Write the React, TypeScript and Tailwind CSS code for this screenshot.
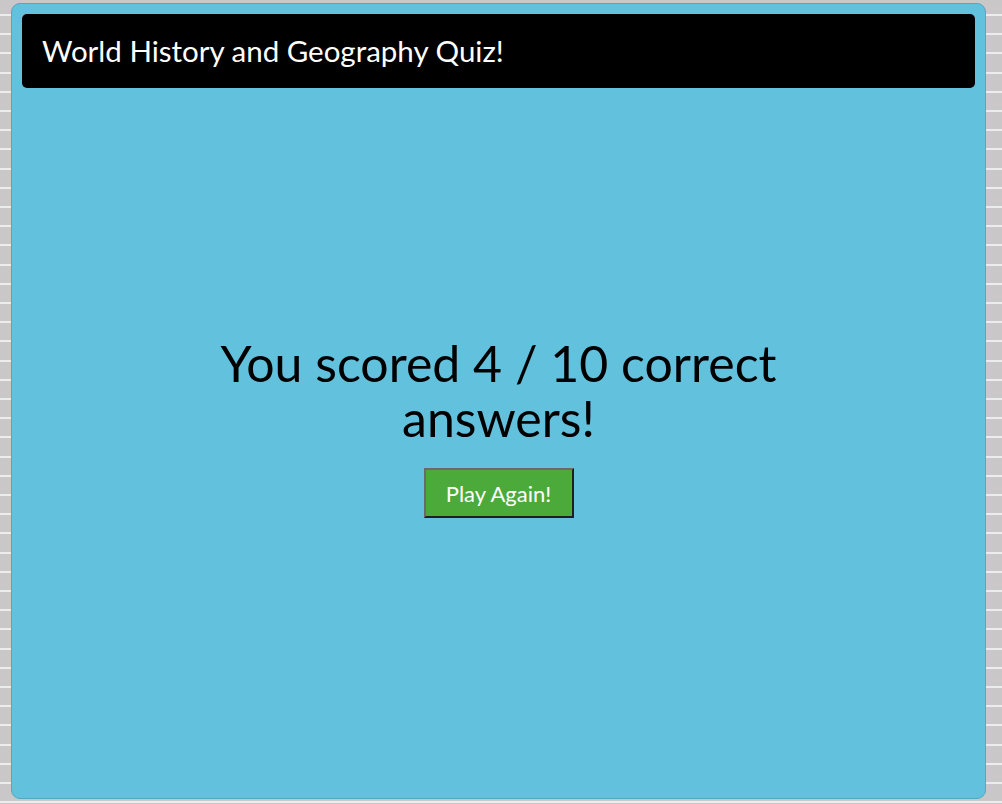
import React from "react";

const App: React.FC = () => {
  return (
    <div className="w-[1002px] h-[804px] overflow-hidden bg-[#c9c7c7] bg-[repeating-linear-gradient(to_bottom,#c9c7c7_0px,#c9c7c7_14px,#ececec_14px,#ececec_16px,#c9c7c7_16px,#c9c7c7_19.2px)] font-['Lato',sans-serif]">
      <div className="ml-[11px] mt-[3px] w-[975px] h-[796px] rounded-[9px] bg-[#62c1dc] border border-[#4fa9c3] p-[10px] flex flex-col">
        {/* Header bar */}
        <header className="h-[74px] rounded-[5px] bg-black flex items-center px-[20px]">
          <h1 className="text-white text-[29.5px] font-normal">World History and Geography Quiz!</h1>
        </header>

        {/* Result */}
        <main className="flex flex-col items-center mt-[248px]">
          <h2 className="text-black text-[50px] leading-[55px] text-center font-normal">
            You scored 4 / 10 correct
            <br />
            answers!
          </h2>
          <button className="mt-[22px] w-[150px] h-[50px] bg-[#4caa3a] text-white text-[22px] border-2 border-t-[#6a6a6a] border-l-[#6a6a6a] border-r-[#1f1f1f] border-b-[#1f1f1f]">
            Play Again!
          </button>
        </main>
      </div>
    </div>
  );
};

export default App;
